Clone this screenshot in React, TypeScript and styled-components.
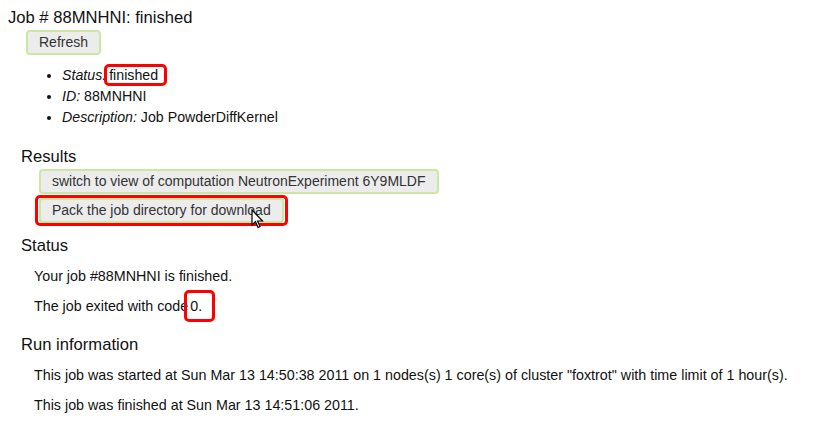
import React from "react";
import styled, { createGlobalStyle } from "styled-components";

const Global = createGlobalStyle`
  html, body { margin: 0; padding: 0; background: #fff; }
  body { font-family: "Liberation Sans", Arial, sans-serif; color: #111; }
`;

const Page = styled.div`
  position: relative;
  padding: 8px 8px 0 8px;
  width: 802px;
  height: 415px;
  overflow: hidden;
`;

const Title = styled.h1`
  margin: 0;
  font-size: 16.6px;
  font-weight: normal;
  line-height: 20px;
  color: #111;
`;

const Button = styled.button`
  display: inline-block;
  font-family: "Liberation Sans", Arial, sans-serif;
  font-size: 14px;
  color: #333;
  background: #ececec;
  border: 2px solid #cde6a4;
  border-radius: 4px;
  height: 25px;
  padding: 0 11px;
  line-height: 21px;
  cursor: pointer;
`;

const Highlight = styled.span<{ $pad: string; $shift?: number }>`
  border: 3px solid #f00;
  border-radius: 5px;
  padding: ${(p) => p.$pad};
  margin-left: ${(p) => p.$shift ?? 0}px;
`;

const HighlightBox = styled.div`
  display: inline-flex;
  border: 3px solid #f00;
  border-radius: 5px;
  padding: 0 1px;
`;

const ButtonRow = styled.div<{ $indent: number; $top: number }>`
  margin-left: ${(p) => p.$indent}px;
  margin-top: ${(p) => p.$top}px;
  display: flex;
`;

const Props = styled.ul`
  margin: 10px 0 0 0;
  padding-left: 54px;
  font-size: 14.2px;
  li { line-height: 21px; }
  em { font-style: italic; }
`;

const Section = styled.h2<{ $top: number }>`
  margin: ${(p) => p.$top}px 0 0 13px;
  font-size: 16.6px;
  font-weight: normal;
  line-height: 20px;
  color: #111;
`;

const Paras = styled.div`
  margin: 5px 0 0 26px;
`;

const Para = styled.p`
  margin: 0;
  font-size: 14.3px;
  line-height: 30px;
  color: #111;
`;

const Cursor = styled.svg`
  position: absolute;
  left: 251px;
  top: 209px;
`;

export default function App() {
  return (
    <>
      <Global />
      <Page>
        <Title>Job # 88MNHNI: finished</Title>
        <ButtonRow $indent={18} $top={2}>
          <Button>Refresh</Button>
        </ButtonRow>
        <Props>
          <li>
            <em>Status:</em>
            <Highlight $pad="0 6px 0 2px" $shift={-2}>finished</Highlight>
          </li>
          <li>
            <em>ID:</em> 88MNHNI
          </li>
          <li>
            <em>Description:</em> Job PowderDiffKernel
          </li>
        </Props>
        <Section $top={19}>Results</Section>
        <ButtonRow $indent={31} $top={2}>
          <Button>switch to view of computation NeutronExperiment 6Y9MLDF</Button>
        </ButtonRow>
        <ButtonRow $indent={27} $top={1}>
          <HighlightBox>
            <Button>Pack the job directory for download</Button>
          </HighlightBox>
        </ButtonRow>
        <Section $top={10}>Status</Section>
        <Paras>
          <Para>Your job #88MNHNI is finished.</Para>
          <Para>
            The job exited with code<Highlight $pad="5px 10px 5px 3px" $shift={-4}>0.</Highlight>
          </Para>
        </Paras>
        <Section $top={14}>Run information</Section>
        <Paras>
          <Para>
            This job was started at Sun Mar 13 14:50:38 2011 on 1 nodes(s) 1 core(s) of cluster "foxtrot" with time limit of 1 hour(s).
          </Para>
          <Para>This job was finished at Sun Mar 13 14:51:06 2011.</Para>
        </Paras>
        <Cursor width="14" height="22" viewBox="0 0 14 22">
          <path d="M1 1 L1 16 L4.5 12.5 L7 18.5 L9 17.6 L6.6 12 L11.5 12 Z" fill="#fff" stroke="#000" strokeWidth="1.2" />
        </Cursor>
      </Page>
    </>
  );
}
